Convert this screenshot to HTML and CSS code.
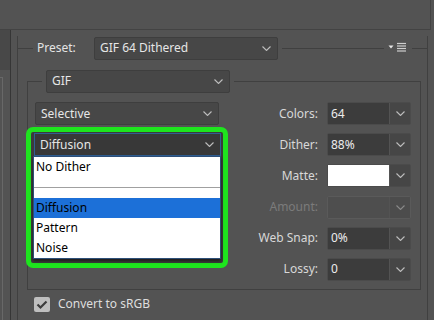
FILE: index.html
```html
<!DOCTYPE html>
<html lang="en">
<head>
    <meta charset="UTF-8">
    <title>Save for Web - GIF</title>
    <link rel="stylesheet" href="styles.css">
</head>
<body>

<div class="window">

    <!--strip above the settings (tabs area)-->
    <div class="top_bar"></div>

    <div class="main">

        <!--edge of the preview pane-->
        <div class="side">
            <div class="side_top"></div>
            <div class="side_box"></div>
        </div>

        <div class="panel">
            <div class="group">
                <div class="group_head">
                    <span class="rule rule_lead"></span>
                    <span class="head_label">Preset:</span>
                    <div class="select head_select">
                        <span>GIF 64 Dithered</span>
                        <svg class="chev" width="9" height="5" viewBox="0 0 9 5"><polyline points="0.5,0.5 4.5,4.5 8.5,0.5"/></svg>
                    </div>
                    <span class="rule rule_fill rule_gap"></span>
                    <svg class="flyout" width="20" height="12" viewBox="0 0 20 12">
                        <polygon points="1.5,3.5 6.5,3.5 4,6.5"/>
                        <line x1="10" y1="1.5" x2="19" y2="1.5"/>
                        <line x1="10" y1="4" x2="19" y2="4"/>
                        <line x1="10" y1="6.5" x2="19" y2="6.5"/>
                        <line x1="10" y1="9" x2="19" y2="9"/>
                    </svg>
                    <span class="rule rule_end"></span>
                </div>

                <div class="group_body outer_body">

                    <div class="group">
                        <div class="group_head">
                            <span class="rule rule_lead_small"></span>
                            <div class="select head_select format_select">
                                <span>GIF</span>
                                <svg class="chev" width="9" height="5" viewBox="0 0 9 5"><polyline points="0.5,0.5 4.5,4.5 8.5,0.5"/></svg>
                            </div>
                            <span class="rule rule_fill rule_gap"></span>
                        </div>

                        <div class="group_body inner_body">
                            <div class="settings_grid">

                                <div class="select left_cell">
                                    <span>Selective</span>
                                    <svg class="chev" width="9" height="5" viewBox="0 0 9 5"><polyline points="0.5,0.5 4.5,4.5 8.5,0.5"/></svg>
                                </div>
                                <div class="field_label">Colors:</div>
                                <div class="combo">
                                    <span class="combo_value">64</span>
                                    <span class="combo_btn"><svg class="chev" width="9" height="5" viewBox="0 0 9 5"><polyline points="0.5,0.5 4.5,4.5 8.5,0.5"/></svg></span>
                                </div>

                                <!--open dither menu, highlighted-->
                                <div class="dither_cell left_cell">
                                    <div class="focus_ring"></div>
                                    <div class="select select_open">
                                        <span>Diffusion</span>
                                        <svg class="chev" width="9" height="5" viewBox="0 0 9 5"><polyline points="0.5,0.5 4.5,4.5 8.5,0.5"/></svg>
                                    </div>
                                    <ul class="menu">
                                        <li>No Dither</li>
                                        <li class="menu_sep"></li>
                                        <li class="menu_active">Diffusion</li>
                                        <li>Pattern</li>
                                        <li>Noise</li>
                                    </ul>
                                </div>
                                <div class="field_label">Dither:</div>
                                <div class="combo">
                                    <span class="combo_value">88%</span>
                                    <span class="combo_btn"><svg class="chev" width="9" height="5" viewBox="0 0 9 5"><polyline points="0.5,0.5 4.5,4.5 8.5,0.5"/></svg></span>
                                </div>

                                <div class="field_label">Matte:</div>
                                <div class="combo">
                                    <span class="combo_value swatch"></span>
                                    <span class="combo_btn"><svg class="chev" width="9" height="5" viewBox="0 0 9 5"><polyline points="0.5,0.5 4.5,4.5 8.5,0.5"/></svg></span>
                                </div>

                                <div class="field_label disabled">Amount:</div>
                                <div class="combo combo_disabled">
                                    <span class="combo_value"></span>
                                    <span class="combo_btn"><svg class="chev" width="9" height="5" viewBox="0 0 9 5"><polyline points="0.5,0.5 4.5,4.5 8.5,0.5"/></svg></span>
                                </div>

                                <div class="field_label">Web Snap:</div>
                                <div class="combo">
                                    <span class="combo_value">0%</span>
                                    <span class="combo_btn"><svg class="chev" width="9" height="5" viewBox="0 0 9 5"><polyline points="0.5,0.5 4.5,4.5 8.5,0.5"/></svg></span>
                                </div>

                                <div class="field_label">Lossy:</div>
                                <div class="combo">
                                    <span class="combo_value">0</span>
                                    <span class="combo_btn"><svg class="chev" width="9" height="5" viewBox="0 0 9 5"><polyline points="0.5,0.5 4.5,4.5 8.5,0.5"/></svg></span>
                                </div>

                            </div>
                        </div>
                    </div>

                    <div class="check_row">
                        <span class="checkbox">
                            <svg width="16" height="15" viewBox="0 0 16 15"><polyline points="3.5,7.5 6.5,10.5 12.5,4.5"/></svg>
                        </span>
                        <span>Convert to sRGB</span>
                    </div>

                </div>
            </div>
        </div>
    </div>
</div>

</body>
</html>
```

FILE: styles.css
```css
body, html {
    margin: 0;
    padding: 0;
    width: 100%;
    height: 100%;
    overflow: hidden;

    background: #535353;
    color: #e2e2e2;
    font-family: "Noto Sans", "Open Sans", sans-serif;
    font-size: 12px;
    line-height: 16px;
}

.window {
    display: flex;
    flex-direction: column;
    height: 100%;
}

.top_bar {
    height: 29px;
    flex-shrink: 0;
    margin-right: 3px;
    border-bottom: 1px solid #434343;
    border-right: 1px solid #434343;
}

.main {
    display: flex;
    flex: 1;
}

/*left pane edge*/
.side {
    display: flex;
    flex-direction: column;
    width: 10px;
    border-right: 1px solid #363636;
}

.side_top {
    height: 40px;
    background: #484848;
}

.side_box {
    flex: 1;
    width: 2px;
    margin-top: 7px;
    border-top: 1px solid #686868;
    border-right: 1px solid #686868;
}

.panel {
    flex: 1;
    padding: 18px 6px 0;
}

/*group boxes, top edge drawn by the head row*/
.group {
    border: 1px solid #404040;
    border-top: none;
}

.group_head {
    display: flex;
    align-items: center;
    height: 24px;
    margin: -12px -1px 0;
}

.rule {
    height: 1px;
    background: #404040;
}

.rule_lead {
    width: 16px;
}

.rule_lead_small {
    width: 15px;
}

.rule_fill {
    flex: 1;
}

.rule_gap {
    margin-left: 4px;
}

.rule_end {
    width: 16px;
    margin-left: 5px;
}

.head_label {
    width: 57px;
    margin-left: 4px;
    color: #e4e4e4;
}

.head_select {
    width: 184px;
    margin-right: 0;
}

.format_select {
    margin-left: 4px;
}

.flyout {
    margin-left: 3px;
}

.flyout polygon {
    fill: #e6e6e6;
}

.flyout line {
    stroke: #cfcfcf;
    stroke-width: 1.2;
}

.group_body {
    display: flex;
    flex-direction: column;
}

.outer_body {
    padding: 21px 6px 20px 9px;
}

.inner_body {
    padding: 9px 9px 8px 7px;
}

/*dropdowns*/
.select {
    display: flex;
    align-items: center;
    justify-content: space-between;
    box-sizing: border-box;
    height: 23px;
    padding: 0 6px 0 5px;
    background: #474747;
    border: 1px solid #3e3e3e;
    border-radius: 2px;
    color: #e6e6e6;
}

.chev {
    fill: none;
    stroke: #bdbdbd;
    stroke-width: 1.1;
}

.settings_grid {
    display: grid;
    grid-template-columns: 184px 1fr 84px;
    grid-auto-rows: 23px;
    column-gap: 9px;
    row-gap: 8.2px;
}

.left_cell {
    grid-column: 1;
}

.field_label {
    grid-column: 2;
    display: flex;
    align-items: center;
    justify-content: flex-end;
    color: #d8d8d8;
}

.field_label.disabled {
    color: #7b7b7b;
}

.combo {
    grid-column: 3;
    display: flex;
    box-sizing: border-box;
    border: 1px solid #4b4b4b;
    border-radius: 2px;
}

.combo_value {
    display: flex;
    align-items: center;
    flex: 1;
    padding-left: 3px;
    background: #3c3c3c;
    color: #ececec;
}

.combo_value.swatch {
    background: #ffffff;
}

.combo_btn {
    display: flex;
    align-items: center;
    justify-content: center;
    width: 20px;
    border-left: 1px solid #535353;
    background: #464646;
}

.combo_disabled {
    border-color: #5a5a5a;
}

.combo_disabled .combo_value {
    background: #4e4e4e;
}

.combo_disabled .combo_btn {
    background: #4c4c4c;
}

.combo_disabled .chev {
    stroke: #8a8a8a;
}

/*open dither dropdown with highlight*/
.dither_cell {
    position: relative;
}

.focus_ring {
    position: absolute;
    top: -6px;
    left: -9px;
    right: -9px;
    bottom: -112px;
    z-index: 1;

    border: 5px solid #1ee41e;
    border-radius: 7px;
    background: #3b3b3b;
}

.select_open {
    position: relative;
    z-index: 2;
    margin: 0 -2px 0 -1px;
    background: #383838;
    border-color: #2f5e92;
    border-radius: 0;
}

.menu {
    position: absolute;
    top: 100%;
    left: -2px;
    right: -2px;
    z-index: 3;

    margin: 0;
    padding: 0;
    list-style: none;
    background: #ffffff;
    border: 1px solid #2d4f78;
    box-shadow: 0 2px 3px rgba(0, 0, 0, 0.55);
    color: #000000;
    line-height: 20px;
}

.menu li {
    height: 20px;
    padding-left: 2px;
}

.menu li.menu_sep {
    display: flex;
    align-items: center;
    height: 21px;
    padding: 0;
}

.menu_sep::after {
    content: "";
    flex: 1;
    height: 1px;
    background: #a0a0a0;
}

.menu li.menu_active {
    background: #1c70d8;
}

.check_row {
    display: flex;
    align-items: center;
    gap: 8px;
    margin: 7px 0 0 7px;
    height: 15px;
    color: #dedede;
}

.checkbox {
    display: flex;
    width: 16px;
    height: 15px;
    box-sizing: border-box;
    background: #bfbfbf;
    border-radius: 2px;
}

.checkbox svg {
    fill: none;
    stroke: #3d3d3d;
    stroke-width: 2.2;
}
```
